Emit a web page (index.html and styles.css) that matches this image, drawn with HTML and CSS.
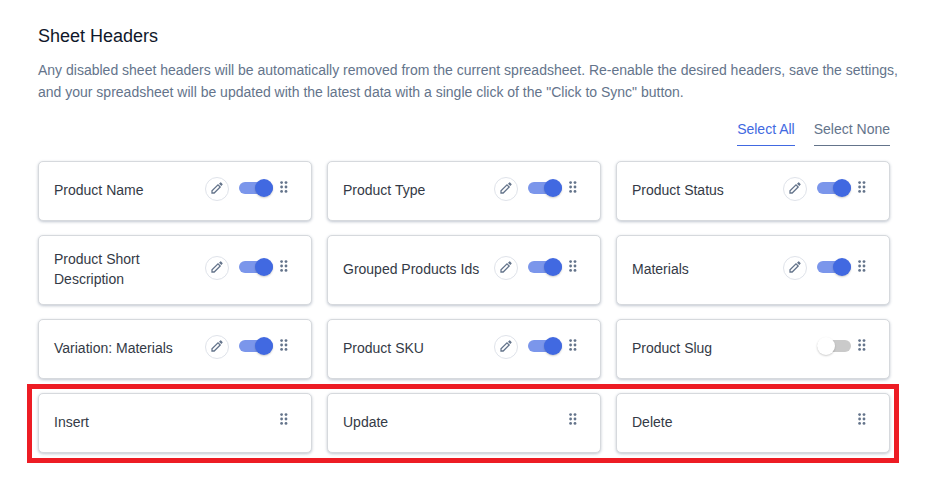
FILE: index.html
```html
<!DOCTYPE html>
<html lang="en">
<head>
<meta charset="utf-8">
<meta name="viewport" content="width=device-width, initial-scale=1">
<title>Sheet Headers</title>
<link rel="stylesheet" href="styles.css">
</head>
<body>
<svg class="sprite" aria-hidden="true">
  <symbol id="pencil" viewBox="0 0 12 12">
    <path d="M1 11V8.8L7 2.8l2.2 2.2L3.2 11Z" fill="none" stroke="currentColor" stroke-width="1.3"/>
    <path d="M8 1.7 9.3.5q.4-.4.8 0l1.4 1.4q.4.4 0 .8L10.3 4Z" fill="currentColor"/>
  </symbol>
  <symbol id="grip" viewBox="0 0 8 12">
    <g fill="currentColor">
      <circle cx="1.6" cy="1.6" r="1.4"/><circle cx="6" cy="1.6" r="1.4"/>
      <circle cx="1.6" cy="6" r="1.4"/><circle cx="6" cy="6" r="1.4"/>
      <circle cx="1.6" cy="10.4" r="1.4"/><circle cx="6" cy="10.4" r="1.4"/>
    </g>
  </symbol>
</svg>
<main class="panel">
  <h1 class="title">Sheet Headers</h1>
  <p class="intro">Any disabled sheet headers will be automatically removed from the current spreadsheet. Re-enable the desired headers, save the settings, and your spreadsheet will be updated with the latest data with a single click of the "Click to Sync" button.</p>
  <nav class="bulk">
    <a class="bulk-link active" href="#all">Select All</a>
    <a class="bulk-link" href="#none">Select None</a>
  </nav>
  <div class="cards">
    <div class="card"><label class="name" for="h1">Product Name</label><div class="controls"><button class="edit" type="button" aria-label="Edit"><svg class="pencil"><use href="#pencil"/></svg></button><input class="switch" id="h1" type="checkbox" checked><button class="grip" type="button" aria-label="Move"><svg class="dots"><use href="#grip"/></svg></button></div></div>
    <div class="card"><label class="name" for="h2">Product Type</label><div class="controls"><button class="edit" type="button" aria-label="Edit"><svg class="pencil"><use href="#pencil"/></svg></button><input class="switch" id="h2" type="checkbox" checked><button class="grip" type="button" aria-label="Move"><svg class="dots"><use href="#grip"/></svg></button></div></div>
    <div class="card"><label class="name" for="h3">Product Status</label><div class="controls"><button class="edit" type="button" aria-label="Edit"><svg class="pencil"><use href="#pencil"/></svg></button><input class="switch" id="h3" type="checkbox" checked><button class="grip" type="button" aria-label="Move"><svg class="dots"><use href="#grip"/></svg></button></div></div>
    <div class="card"><label class="name" for="h4">Product Short Description</label><div class="controls"><button class="edit" type="button" aria-label="Edit"><svg class="pencil"><use href="#pencil"/></svg></button><input class="switch" id="h4" type="checkbox" checked><button class="grip" type="button" aria-label="Move"><svg class="dots"><use href="#grip"/></svg></button></div></div>
    <div class="card"><label class="name" for="h5">Grouped Products Ids</label><div class="controls"><button class="edit" type="button" aria-label="Edit"><svg class="pencil"><use href="#pencil"/></svg></button><input class="switch" id="h5" type="checkbox" checked><button class="grip" type="button" aria-label="Move"><svg class="dots"><use href="#grip"/></svg></button></div></div>
    <div class="card"><label class="name" for="h6">Materials</label><div class="controls"><button class="edit" type="button" aria-label="Edit"><svg class="pencil"><use href="#pencil"/></svg></button><input class="switch" id="h6" type="checkbox" checked><button class="grip" type="button" aria-label="Move"><svg class="dots"><use href="#grip"/></svg></button></div></div>
    <div class="card"><label class="name" for="h7">Variation: Materials</label><div class="controls"><button class="edit" type="button" aria-label="Edit"><svg class="pencil"><use href="#pencil"/></svg></button><input class="switch" id="h7" type="checkbox" checked><button class="grip" type="button" aria-label="Move"><svg class="dots"><use href="#grip"/></svg></button></div></div>
    <div class="card"><label class="name" for="h8">Product SKU</label><div class="controls"><button class="edit" type="button" aria-label="Edit"><svg class="pencil"><use href="#pencil"/></svg></button><input class="switch" id="h8" type="checkbox" checked><button class="grip" type="button" aria-label="Move"><svg class="dots"><use href="#grip"/></svg></button></div></div>
    <div class="card"><label class="name" for="h9">Product Slug</label><div class="controls"><input class="switch" id="h9" type="checkbox"><button class="grip" type="button" aria-label="Move"><svg class="dots"><use href="#grip"/></svg></button></div></div>
  </div>
  <div class="cards marked">
    <div class="card"><span class="name">Insert</span><div class="controls"><button class="grip" type="button" aria-label="Move"><svg class="dots"><use href="#grip"/></svg></button></div></div>
    <div class="card"><span class="name">Update</span><div class="controls"><button class="grip" type="button" aria-label="Move"><svg class="dots"><use href="#grip"/></svg></button></div></div>
    <div class="card"><span class="name">Delete</span><div class="controls"><button class="grip" type="button" aria-label="Move"><svg class="dots"><use href="#grip"/></svg></button></div></div>
  </div>
</main>
</body>
</html>
```
FILE: styles.css
```css
* {
  box-sizing: border-box;
}

body {
  margin: 0;
  background: #fff;
  color: #343a46;
  font: 14px/20px "Liberation Sans", Arial, sans-serif;
}

.sprite {
  display: none;
}

.panel {
  padding: 24px 42px 39px 38px;
}

.title {
  margin: 0;
  color: #0f172a;
  font-size: 18px;
  font-weight: 400;
  line-height: 24px;
}

.intro {
  margin: 11px -20px 0 0;
  color: #64748b;
  line-height: 22px;
}

.bulk {
  display: flex;
  justify-content: flex-end;
  gap: 19px;
  margin: 16px 0 15px;
}

.bulk-link {
  padding-bottom: 6px;
  border-bottom: 1px solid #64748b;
  color: #64748b;
  text-decoration: none;
}

.bulk-link.active {
  border-color: #4169e1;
  color: #4169e1;
}

.cards {
  display: grid;
  grid-template-columns: repeat(3, 1fr);
  gap: 14px 15px;
}

.card {
  display: flex;
  align-items: center;
  justify-content: space-between;
  gap: 10px;
  min-height: 60px;
  padding: 13px 23px 15px 15px;
  border: 1px solid #d6d9dd;
  border-radius: 5px;
  background: #fff;
  box-shadow: 0 1px 3px #64748b66;
}

.controls {
  display: flex;
  flex: none;
  align-items: flex-start;
  height: 26px;
}

.edit,
.grip {
  display: flex;
  padding: 0;
  border: 0;
  background: none;
  color: #64748b;
  cursor: pointer;
}

.edit {
  align-items: center;
  justify-content: center;
  width: 24px;
  height: 24px;
  padding-bottom: 2px;
  border: 1px solid #dfe3ea;
  border-radius: 50%;
}

.pencil {
  width: 12px;
  height: 12px;
}

.switch {
  display: flex;
  align-items: center;
  appearance: none;
  width: 34px;
  height: 12px;
  margin: 5px 7px 0 10px;
  border-radius: 6px;
  background: #cacaca;
}

.switch::before {
  content: "";
  flex: none;
  width: 18px;
  height: 18px;
  border-radius: 50%;
  background: #fff;
  box-shadow: 0 1px 2px #0003;
}

.switch:checked {
  justify-content: flex-end;
  background: #7b96eb;
}

.switch:checked::before {
  background: #4169e1;
}

.grip {
  margin-top: 4px;
  cursor: move;
}

.dots {
  width: 8px;
  height: 12px;
}

.marked {
  position: relative;
  margin-top: 14px;
}

.marked::after {
  content: "";
  position: absolute;
  inset: -9px -9px -10px -11px;
  border: 5px solid #ed1c24;
  pointer-events: none;
}
```
